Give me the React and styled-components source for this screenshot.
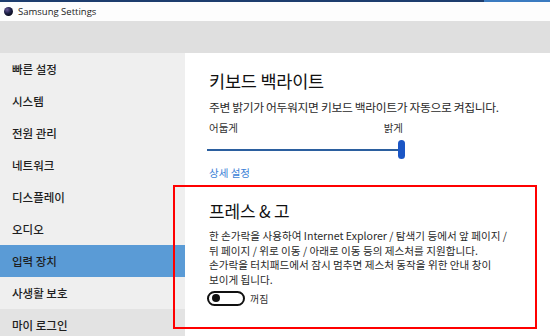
import React from 'react'
import styled, { createGlobalStyle } from 'styled-components'

const GlobalStyle = createGlobalStyle`
    html, body { margin: 0; padding: 0; background: #fff; }
    body {
        font-family: "Noto Sans CJK KR", "Noto Sans", sans-serif;
        width: 550px;
        height: 336px;
        overflow: hidden;
    }
`

const Window = styled.div`
    position: relative;
    width: 550px;
    height: 336px;
    display: flex;
    flex-direction: column;
    overflow: hidden;
`
const TopLine = styled.div`
    flex-shrink: 0;
    height: 2px;
    background: linear-gradient(to right, #1d3d6e 0%, #1d3d6e 88%, #3b7bc0 88%);
`
const TitleBar = styled.div`
    flex-shrink: 0;
    height: 19px;
    display: flex;
    align-items: center;
    gap: 5px;
    padding-left: 4px;
    background: #fdfdfd;
    font-family: "Open Sans", "Noto Sans", sans-serif;
    font-size: 9.5px;
    color: #222;
`
const Band = styled.div`
    flex-shrink: 0;
    height: 32px;
    background: #dfdfdf;
`
const Body = styled.div`
    flex: 1;
    min-height: 0;
    display: flex;
`
const Sidebar = styled.nav`
    width: 185px;
    flex-shrink: 0;
    background: #efefef;
    display: flex;
    flex-direction: column;
`
const NavItem = styled.div`
    flex-shrink: 0;
    height: 32px;
    display: flex;
    align-items: center;
    padding-left: 12px;
    font-size: 11.5px;
    font-weight: 500;
    color: #1e1e1e;
    background: ${p => (p.$active ? '#5a9bd6' : p.$hover ? '#e3e3e3' : 'transparent')};
`
const Content = styled.main`
    flex: 1;
    padding: 15px 0 0 24px;
    background: #fff;
    color: #1a1a1a;
`
const Heading = styled.h2`
    margin: 0;
    font-size: 17.5px;
    font-weight: 400;
    letter-spacing: -0.2px;
    line-height: 26px;
    color: #111;
`
const Desc = styled.p`
    margin: 4.5px 0 0;
    font-size: 11.8px;
    letter-spacing: -0.35px;
    line-height: 15px;
    color: #2a2a2a;
`
const SliderLabels = styled.div`
    width: 194px;
    display: flex;
    justify-content: space-between;
    margin-top: 6px;
    font-size: 10.5px;
    line-height: 15px;
    color: #333;
`
const Slider = styled.div`
    position: relative;
    width: 198px;
    height: 20px;
    margin: 5.5px 0 0 -2px;
    display: flex;
    align-items: center;
`
const Track = styled.div`
    flex: 1;
    height: 2px;
    background: #2b5f9f;
`
const Thumb = styled.div`
    position: absolute;
    right: 0;
    top: 0;
    width: 7px;
    height: 19px;
    border-radius: 4px;
    background: #1b56c5;
`
const Link = styled.div`
    margin-top: 4.5px;
    font-size: 10.5px;
    line-height: 15px;
    color: #3b7fd6;
`
const Section = styled.section`
    margin-top: 19.5px;
`
const SubHeading = styled.h3`
    margin: 0;
    font-size: 17px;
    font-weight: 400;
    letter-spacing: -0.2px;
    line-height: 24px;
    color: #111;
`
const Para = styled.p`
    margin: 6px 0 0;
    font-size: 10.6px;
    letter-spacing: 0;
    line-height: 14.6px;
    white-space: nowrap;
    color: #2a2a2a;
`
const ToggleRow = styled.div`
    margin-top: 3.4px;
    display: flex;
    align-items: center;
    gap: 5px;
    font-size: 10px;
    color: #333;
`
const Toggle = styled.div`
    width: 31px;
    height: 11px;
    border: 2px solid #111;
    border-radius: 8px;
    display: flex;
    align-items: center;
    padding-left: 3px;
    margin-left: -2px;
    &::before {
        content: "";
        width: 8px;
        height: 8px;
        border-radius: 50%;
        background: #111;
    }
`
const Highlight = styled.div`
    position: absolute;
    left: 173px;
    top: 185px;
    width: 360px;
    height: 140px;
    border: 2px solid #ff0000;
    pointer-events: none;
`

const Logo = () => (
    <svg width="9" height="9" viewBox="0 0 10 10">
        <defs>
            <radialGradient id="g" cx="35%" cy="30%" r="70%">
                <stop offset="0%" stopColor="#6a5a9a" />
                <stop offset="60%" stopColor="#1c1f45" />
                <stop offset="100%" stopColor="#0a0c1e" />
            </radialGradient>
        </defs>
        <circle cx="5" cy="5" r="5" fill="url(#g)" />
    </svg>
)

function App() {
    const nav = ['빠른 설정', '시스템', '전원 관리', '네트워크', '디스플레이', '오디오', '입력 장치', '사생활 보호', '마이 로그인']

    return (
        <>
            <GlobalStyle />
            <Window>
                <TopLine />
                <TitleBar>
                    <Logo />
                    Samsung Settings
                </TitleBar>
                <Band />
                <Body>
                    <Sidebar>
                        {nav.map((n, i) => (
                            <NavItem key={i} $active={i === 6} $hover={i === 8}>{n}</NavItem>
                        ))}
                    </Sidebar>
                    <Content>
                        <Heading>키보드 백라이트</Heading>
                        <Desc>주변 밝기가 어두워지면 키보드 백라이트가 자동으로 켜집니다.</Desc>
                        <SliderLabels>
                            <span>어둡게</span>
                            <span>밝게</span>
                        </SliderLabels>
                        <Slider>
                            <Track />
                            <Thumb />
                        </Slider>
                        <Link>상세 설정</Link>
                        <Section>
                            <SubHeading>프레스 &amp; 고</SubHeading>
                            <Para>
                                한 손가락을 사용하여 Internet Explorer / 탐색기 등에서 앞 페이지 /<br />
                                뒤 페이지 / 위로 이동 / 아래로 이동 등의 제스처를 지원합니다.<br />
                                손가락을 터치패드에서 잠시 멈추면 제스처 동작을 위한 안내 창이<br />
                                보이게 됩니다.
                            </Para>
                            <ToggleRow>
                                <Toggle />
                                꺼짐
                            </ToggleRow>
                        </Section>
                    </Content>
                </Body>
                <Highlight />
            </Window>
        </>
    )
}

export default App
